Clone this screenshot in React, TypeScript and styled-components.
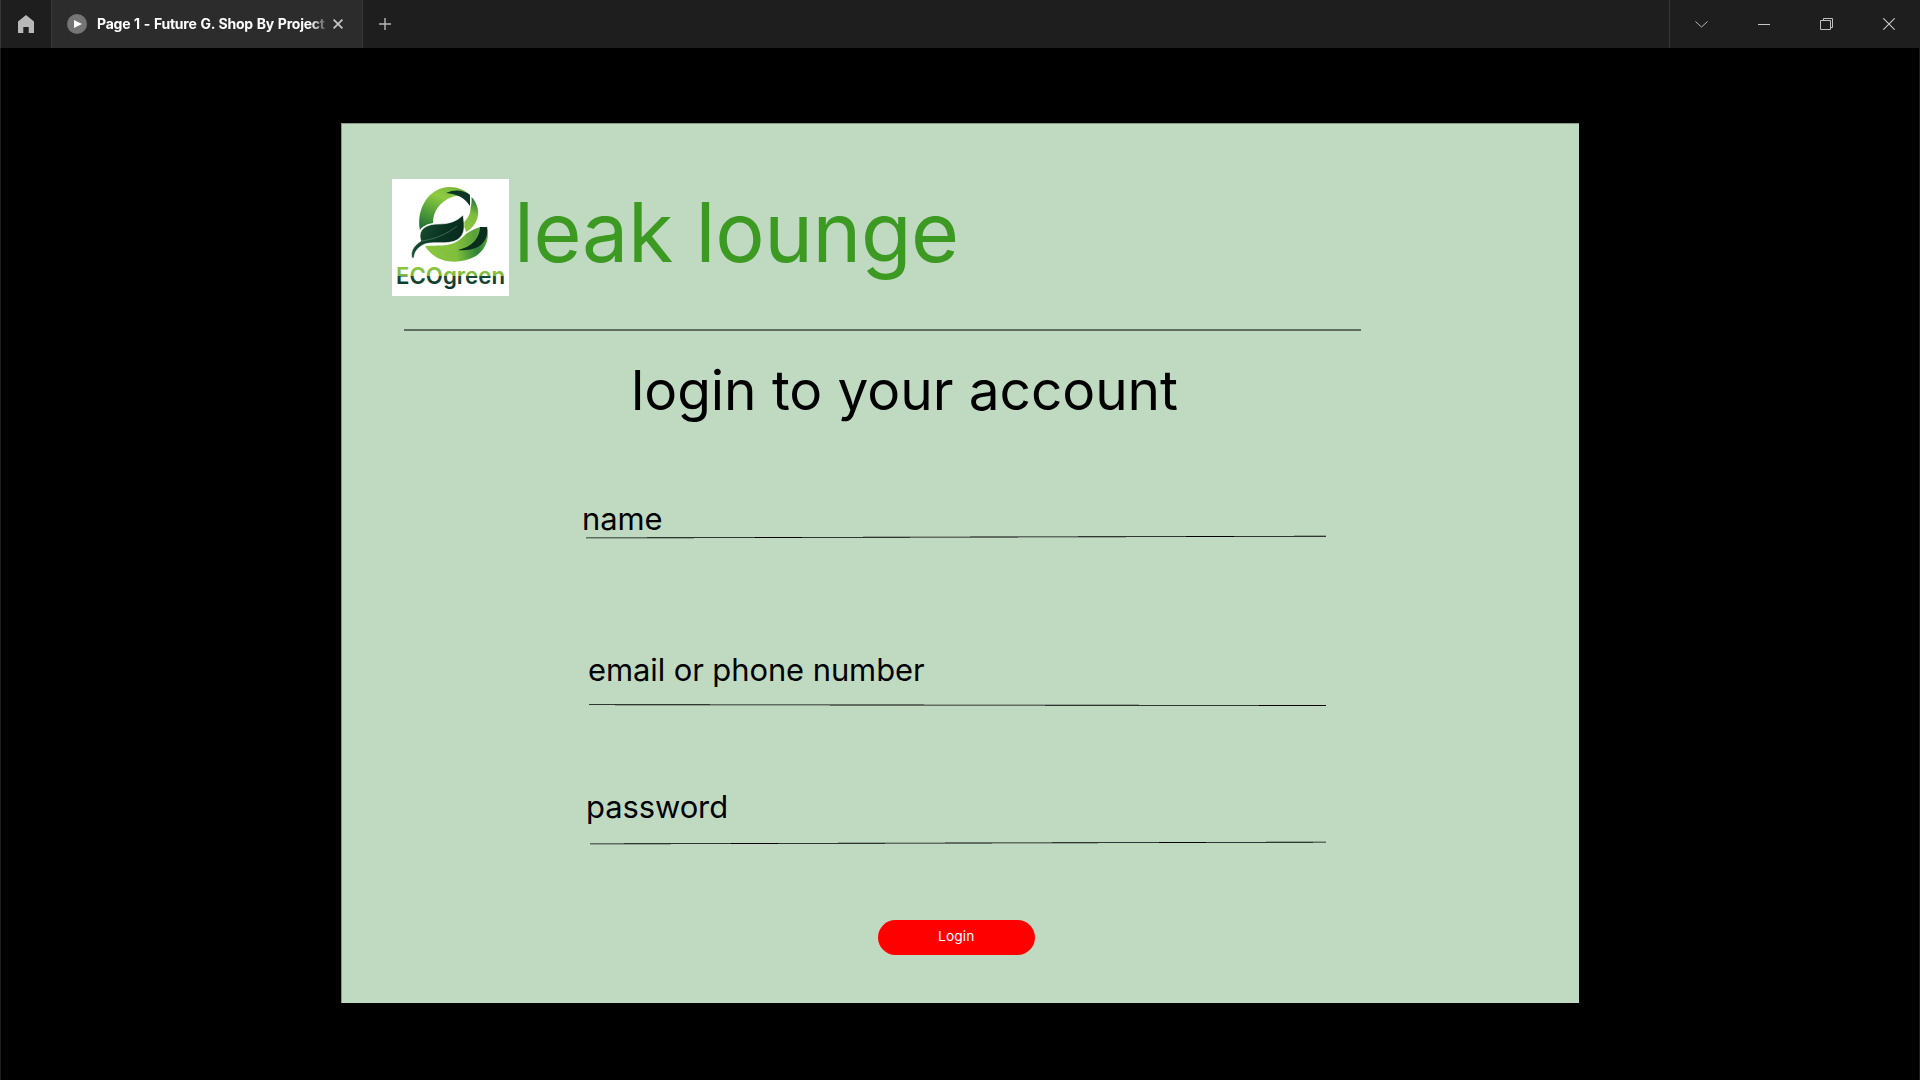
import React from "react";
import styled, { createGlobalStyle } from "styled-components";

const Global = createGlobalStyle`
  *, *::before, *::after { box-sizing: border-box; }
  body { margin: 0; background: #000; font-family: Inter, "Liberation Sans", sans-serif; overflow: hidden; }
`;

const Window = styled.div`
  width: 1920px;
  height: 1080px;
  display: flex;
  flex-direction: column;
  background: #000;
`;

const TitleBar = styled.header`
  display: flex;
  height: 48px;
  flex: none;
  background: #1e1e1e;
  border-left: 1px solid #383838;
`;

const BarButton = styled.button<{ $width: number }>`
  display: flex;
  align-items: center;
  justify-content: center;
  width: ${(p) => p.$width}px;
  height: 48px;
  padding: 0;
  border: 0;
  background: none;
`;

const Tab = styled.div`
  display: flex;
  align-items: center;
  width: 312px;
  padding-left: 15px;
  background: #2c2c2c;
  border-left: 1px solid #383838;
  border-right: 1px solid #383838;
`;

const TabTitle = styled.span`
  width: 228px;
  margin-left: 10px;
  overflow: hidden;
  white-space: nowrap;
  color: #fff;
  font-size: 14px;
  font-weight: 700;
  line-height: 20px;
  letter-spacing: -0.24px;
  word-spacing: 0.8px;
  mask-image: linear-gradient(to right, #000 214px, transparent 232px);
`;

const Controls = styled.div`
  display: flex;
  margin-left: auto;
  border-left: 1px solid #383838;
`;

const Stage = styled.main`
  flex: 1;
  display: flex;
  justify-content: center;
  align-items: flex-start;
  padding-top: 75px;
  border: solid #1e1e1e;
  border-width: 0 1px;
`;

const Page = styled.section`
  display: flex;
  flex-direction: column;
  width: 1238px;
  height: 880px;
  background: #c0dac1;
  box-shadow: inset 1px 1px #8a998a;
`;

const Brand = styled.div`
  display: flex;
  height: 117px;
  margin: 56px 0 0 51px;
`;

const BrandName = styled.h1`
  margin: 2.6px 0 0 5px;
  color: #3c9922;
  font-size: 82.5px;
  font-weight: 400;
  line-height: 100px;
  letter-spacing: -0.42px;
  white-space: nowrap;
`;

const Divider = styled.hr`
  width: 957.5px;
  height: 2px;
  margin: 33px 0 0 62.5px;
  border: 0;
  background: #606d61;
`;

const Heading = styled.h2`
  margin: 25px 0 0 290px;
  color: #000;
  font-size: 55px;
  font-weight: 400;
  line-height: 68px;
  letter-spacing: -0.07px;
  white-space: nowrap;
`;

const Field = styled.label<{ $top: number; $left: number }>`
  display: flex;
  flex-direction: column;
  height: 60px;
  margin: ${(p) => p.$top}px 0 0 ${(p) => p.$left}px;
`;

const FieldLabel = styled.span`
  color: #000;
  font-size: 30.94px;
  line-height: 38px;
  letter-spacing: -0.08px;
  white-space: nowrap;
`;

const Underline = styled.svg<{ $top: number; $left: number }>`
  display: block;
  flex: none;
  margin: ${(p) => p.$top}px 0 0 ${(p) => p.$left}px;
`;

const LoginButton = styled.button`
  width: 157px;
  height: 35px;
  margin: 72px 0 0 537.3px;
  padding: 0 1px 3px 0;
  border: 0;
  border-radius: 18px;
  background: #f00;
  color: #fff;
  font: 400 13.75px/17px Inter, sans-serif;
  letter-spacing: 0.1px;
`;

function Logo() {
  return (
    <svg width="117" height="117" viewBox="0 0 117 117">
      <defs>
        <linearGradient id="arc" x1="0.1" y1="1" x2="0.6" y2="0">
          <stop offset="0" stopColor="#1d6b35" />
          <stop offset="0.35" stopColor="#4e9c38" />
          <stop offset="0.75" stopColor="#8fcb40" />
          <stop offset="1" stopColor="#7dbb3d" />
        </linearGradient>
        <linearGradient id="bowl" x1="0" y1="0.3" x2="1" y2="0.2">
          <stop offset="0" stopColor="#8cc63f" />
          <stop offset="0.45" stopColor="#7fbf3d" />
          <stop offset="0.8" stopColor="#2d8038" />
          <stop offset="1" stopColor="#5da93b" />
        </linearGradient>
        <linearGradient id="right" x1="0.6" y1="0" x2="0.4" y2="1">
          <stop offset="0" stopColor="#236f35" />
          <stop offset="0.45" stopColor="#7fbd3d" />
          <stop offset="1" stopColor="#8cc63f" />
        </linearGradient>
        <linearGradient id="leaf" x1="0" y1="0" x2="1" y2="0.3">
          <stop offset="0" stopColor="#1c5c34" />
          <stop offset="0.6" stopColor="#0b3524" />
          <stop offset="1" stopColor="#082a1e" />
        </linearGradient>
        <linearGradient id="word" x1="0" y1="87" x2="0" y2="108" gradientUnits="userSpaceOnUse">
          <stop offset="0" stopColor="#8fc83f" />
          <stop offset="0.48" stopColor="#79b83b" />
          <stop offset="0.5" stopColor="#164a33" />
          <stop offset="1" stopColor="#0d3829" />
        </linearGradient>
      </defs>
      <rect width="117" height="117" fill="#fff" />
      <path d="M28 51C24 31 36 8 58 8C66 8 73 11 78 16L76 22C71 17 65 16 60 18C47 23 41 33 41 44C35 45 31 47 28 51Z" fill="url(#arc)" />
      <path d="M54 14C63 10 72 11 78 16L78 27C72 18 65 15 54 14Z" fill="#0b3524" />
      <path d="M79.5 18C90 29 88 45 74 53C73 49 72 47 69 46C76 40 78.5 35 78.5 29C79.5 25 79.8 22 79.5 18Z" fill="url(#right)" />
      {/* Lower bowl of the e: green body with a dark inner crescent. */}
      <path d="M33 67C45 66 56 68 66 62C69 60 72 57 74 55C79 52 84 49 89 48H95C98 61 93 71 84 77C66 87 43 84 33 67Z" fill="url(#bowl)" />
      <path d="M67 61C70 59 73 56 75 54C80 51 84 49 88 48C88 60 79 69 66 71C59 72 52 70 46 68C54 69 62 66 67 61Z" fill="#8cc63f" fillOpacity="0.45" />
      <path d="M88 48H95C97 61 89 73 66 71C80 68 88 59 88 48Z" fill="#092e20" />
      <path d="M20 79C18 71 23 66 29 62C25 51 34 45 46 45C58 45 65 42 71 36C73 48 73 56 65 61C56 66 42 62 33 65C26 68 22 73 22 79Z" fill="url(#leaf)" stroke="#fff" strokeWidth="0.6" />
      <path d="M30 62C42 60 54 56 65 47" fill="none" stroke="#5d8f70" strokeWidth="0.6" />
      <text x="4" y="104.5" textLength="109" lengthAdjust="spacingAndGlyphs" fill="url(#word)" fontFamily="Inter, sans-serif" fontWeight="600" fontSize="22.5">ECOgreen</text>
    </svg>
  );
}

// One stretch of a slightly tilted hairline: start, end, pixel row, coverage.
type Stretch = [number, number, number, number];
type Rule = { left: number; top: number; width: number; stretches: Stretch[] };

const nameRule: Rule = {
  left: 4,
  top: -3,
  width: 740,
  stretches: [
    [0, 108, 3, 0.25],
    [0, 61, 2, 0.5],
    [61, 169, 2, 0.75],
    [169, 216, 2, 1],
    [216, 324, 2, 0.75],
    [324, 432, 2, 0.5],
    [432, 540, 2, 0.25],
    [277, 384, 1, 0.25],
    [384, 492, 1, 0.5],
    [492, 600, 1, 0.75],
    [600, 648, 1, 1],
    [648, 740, 1, 0.75],
    [708, 740, 0, 0.25],
  ],
};

const emailRule: Rule = {
  left: 1,
  top: 15,
  width: 737,
  stretches: [
    [0, 121, 0, 0.75],
    [121, 335, 0, 0.5],
    [335, 550, 0, 0.25],
    [26, 241, 1, 0.25],
    [241, 456, 1, 0.5],
    [456, 670, 1, 0.75],
    [670, 737, 1, 1],
  ],
};

const passwordRule: Rule = {
  left: 4,
  top: 15,
  width: 736,
  stretches: [
    [0, 81, 3, 0.25],
    [0, 34, 2, 0.5],
    [34, 141, 2, 0.75],
    [141, 188, 2, 1],
    [188, 295, 2, 0.75],
    [295, 402, 2, 0.5],
    [402, 508, 2, 0.25],
    [248, 355, 1, 0.25],
    [355, 462, 1, 0.5],
    [462, 569, 1, 0.75],
    [569, 616, 1, 1],
    [616, 723, 1, 0.75],
    [723, 736, 1, 0.5],
    [676, 736, 0, 0.25],
  ],
};

function FieldRow({ text, top, left, rule }: { text: string; top: number; left: number; rule: Rule }) {
  return (
    <Field $top={top} $left={left}>
      <FieldLabel>{text}</FieldLabel>
      <Underline $top={rule.top} $left={rule.left} width={rule.width} height={4}>
        {rule.stretches.map(([x1, x2, row, alpha]) => (
          <line key={`${x1}-${row}`} x1={x1} x2={x2} y1={row + 0.5} y2={row + 0.5} stroke="#000" strokeOpacity={alpha} />
        ))}
      </Underline>
    </Field>
  );
}

export default function App() {
  return (
    <Window>
      <Global />
      <TitleBar>
        <BarButton $width={50} aria-label="Home">
          <svg width="16" height="18" viewBox="0 0 16 18"><path d="M8 0L0 6.5V18H5.3V12H10.7V18H16V6.5Z" fill="#b8b8b8" /></svg>
        </BarButton>
        <Tab>
          <svg width="20" height="20" viewBox="0 0 20 20"><circle cx="10" cy="10" r="10" fill="#757575" /><path d="M7 6V14L15 10Z" fill="#fff" /></svg>
          <TabTitle>Page 1 - Future G. Shop By Project</TabTitle>
          <BarButton $width={26} aria-label="Close tab">
            <svg width="10" height="10" viewBox="0 0 10 10"><path d="M.6 .6L9.4 9.4M9.4 .6L.6 9.4" stroke="#c8c8c8" strokeWidth="1.7" /></svg>
          </BarButton>
        </Tab>
        <BarButton $width={43} aria-label="New tab">
          <svg width="12" height="12" viewBox="0 0 12 12"><path d="M6 0V12M0 6H12" stroke="#b8b8b8" strokeWidth="1.4" /></svg>
        </BarButton>
        <Controls>
          <BarButton $width={63} aria-label="More">
            <svg width="13" height="7" viewBox="0 0 13 7"><path d="M.5 .5L6.5 6L12.5 .5" fill="none" stroke="#b8b8b8" /></svg>
          </BarButton>
          <BarButton $width={62} aria-label="Minimize">
            <svg width="12" height="1" viewBox="0 0 12 1"><rect width="12" height="1" fill="#c8c8c8" /></svg>
          </BarButton>
          <BarButton $width={63} aria-label="Restore">
            <svg width="13" height="12" viewBox="0 0 13 12" fill="none" stroke="#c0c0c0"><path d="M.5 2.5H10.5V11.5H.5ZM3.5 2.5V.5H12.5V9.5H10.5" /></svg>
          </BarButton>
          <BarButton $width={62} aria-label="Close">
            <svg width="12" height="12" viewBox="0 0 12 12"><path d="M.3 .3L11.7 11.7M11.7 .3L.3 11.7" stroke="#c8c8c8" strokeWidth="1.1" /></svg>
          </BarButton>
        </Controls>
      </TitleBar>
      <Stage>
        <Page>
          <Brand>
            <Logo />
            <BrandName>leak lounge</BrandName>
          </Brand>
          <Divider />
          <Heading>login to your account</Heading>
          <FieldRow text="name" top={76} left={241} rule={nameRule} />
          <FieldRow text="email or phone number" top={91} left={247} rule={emailRule} />
          <FieldRow text="password" top={77} left={245} rule={passwordRule} />
          <LoginButton>Login</LoginButton>
        </Page>
      </Stage>
    </Window>
  );
}
